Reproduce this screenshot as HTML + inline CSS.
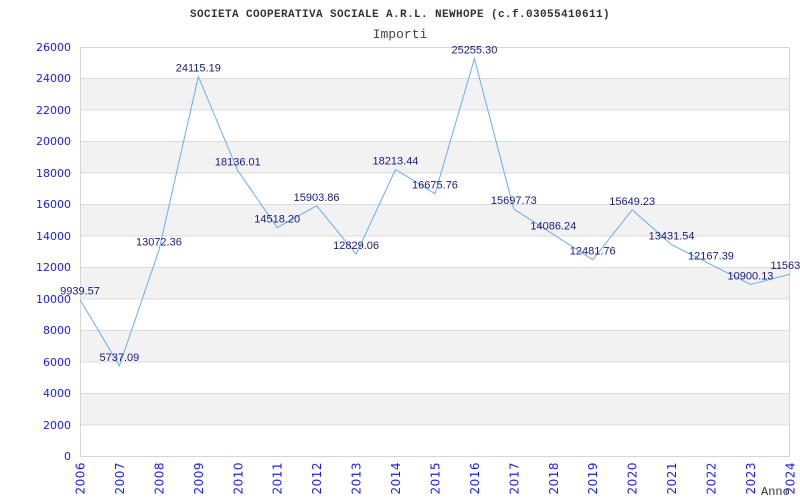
<!DOCTYPE html>
<html><head><meta charset="utf-8"><style>
html,body{margin:0;padding:0;background:#fff;}
svg{display:block;}
</style></head><body>
<svg width="800" height="500" xmlns="http://www.w3.org/2000/svg">
<rect width="800" height="500" fill="#fff"/>
<text x="400" y="17" text-anchor="middle" font-family="Liberation Mono, DejaVu Sans Mono, monospace" font-size="11" font-weight="bold" letter-spacing="0.4" fill="#333">SOCIETA COOPERATIVA SOCIALE A.R.L. NEWHOPE (c.f.03055410611)</text>
<text x="400" y="38" text-anchor="middle" font-family="Liberation Mono, DejaVu Sans Mono, monospace" font-size="13" fill="#444">Importi</text>
<g fill="#f2f2f2">
<rect x="81" y="78.5" width="709" height="31.5"/>
<rect x="81" y="141.4" width="709" height="31.5"/>
<rect x="81" y="204.3" width="709" height="31.5"/>
<rect x="81" y="267.2" width="709" height="31.5"/>
<rect x="81" y="330.2" width="709" height="31.5"/>
<rect x="81" y="393.1" width="709" height="31.5"/>
</g>
<g stroke="#dcdcdc" stroke-width="1">
<line x1="81" y1="78.5" x2="790" y2="78.5"/><line x1="81" y1="110" x2="790" y2="110"/>
<line x1="81" y1="141.5" x2="790" y2="141.5"/><line x1="81" y1="173" x2="790" y2="173"/>
<line x1="81" y1="204.5" x2="790" y2="204.5"/><line x1="81" y1="236" x2="790" y2="236"/>
<line x1="81" y1="267.5" x2="790" y2="267.5"/><line x1="81" y1="299" x2="790" y2="299"/>
<line x1="81" y1="330.5" x2="790" y2="330.5"/><line x1="81" y1="362" x2="790" y2="362"/>
<line x1="81" y1="393.5" x2="790" y2="393.5"/><line x1="81" y1="425" x2="790" y2="425"/>
</g>
<rect x="80.5" y="47.5" width="709" height="409" fill="none" stroke="#d6d6d6"/>
<g font-family="DejaVu Sans, Liberation Sans, sans-serif" font-size="11" fill="#1a1aff" text-anchor="end">
<text x="71" y="51">26000</text><text x="71" y="82">24000</text><text x="71" y="114">22000</text>
<text x="71" y="145">20000</text><text x="71" y="177">18000</text><text x="71" y="208">16000</text>
<text x="71" y="240">14000</text><text x="71" y="271">12000</text><text x="71" y="303">10000</text>
<text x="71" y="334">8000</text><text x="71" y="366">6000</text><text x="71" y="397">4000</text>
<text x="71" y="429">2000</text><text x="71" y="460">0</text>
</g>
<g font-family="DejaVu Sans, Liberation Sans, sans-serif" font-size="12" fill="#1a1aff" text-anchor="end" letter-spacing="0.5">
<text transform="translate(84.5,462) rotate(-90)">2006</text>
<text transform="translate(124,462) rotate(-90)">2007</text>
<text transform="translate(163.4,462) rotate(-90)">2008</text>
<text transform="translate(202.8,462) rotate(-90)">2009</text>
<text transform="translate(242.3,462) rotate(-90)">2010</text>
<text transform="translate(281.7,462) rotate(-90)">2011</text>
<text transform="translate(321.1,462) rotate(-90)">2012</text>
<text transform="translate(360.6,462) rotate(-90)">2013</text>
<text transform="translate(400,462) rotate(-90)">2014</text>
<text transform="translate(439.5,462) rotate(-90)">2015</text>
<text transform="translate(478.9,462) rotate(-90)">2016</text>
<text transform="translate(518.3,462) rotate(-90)">2017</text>
<text transform="translate(557.8,462) rotate(-90)">2018</text>
<text transform="translate(597.2,462) rotate(-90)">2019</text>
<text transform="translate(636.7,462) rotate(-90)">2020</text>
<text transform="translate(676.1,462) rotate(-90)">2021</text>
<text transform="translate(715.5,462) rotate(-90)">2022</text>
<text transform="translate(755,462) rotate(-90)">2023</text>
<text transform="translate(794.4,462) rotate(-90)">2024</text>
</g>
<text x="761" y="495" font-family="Liberation Mono, DejaVu Sans Mono, monospace" font-size="12" fill="#333">Anno</text>
<polyline fill="none" stroke="#6aaef5" stroke-width="1" points="80,299.6 119.4,365.8 158.9,250.4 198.3,76.6 237.8,170.7 277.2,227.6 316.6,205.8 356.1,254.2 395.5,169.5 435,193.7 474.4,58.7 513.8,209.1 553.3,234.4 592.7,259.7 632.2,209.8 671.6,244.7 711,264.6 750.5,284.5 790,274.1"/>
<g font-family="Liberation Sans, sans-serif" font-size="11" fill="#1a1a80" text-anchor="middle">
<text x="80" y="294.6">9939.57</text>
<text x="119.4" y="360.8">5737.09</text>
<text x="158.9" y="245.4">13072.36</text>
<text x="198.3" y="71.6">24115.19</text>
<text x="237.8" y="165.7">18136.01</text>
<text x="277.2" y="222.6">14518.20</text>
<text x="316.6" y="200.8">15903.86</text>
<text x="356.1" y="249.2">12829.06</text>
<text x="395.5" y="164.5">18213.44</text>
<text x="435" y="188.7">16675.76</text>
<text x="474.4" y="53.7">25255.30</text>
<text x="513.8" y="204.1">15697.73</text>
<text x="553.3" y="229.4">14086.24</text>
<text x="592.7" y="254.7">12481.76</text>
<text x="632.2" y="204.8">15649.23</text>
<text x="671.6" y="239.7">13431.54</text>
<text x="711" y="259.6">12167.39</text>
<text x="750.5" y="279.5">10900.13</text>
<text x="790" y="269.1">11563.9</text>
</g>
</svg>
</body></html>
